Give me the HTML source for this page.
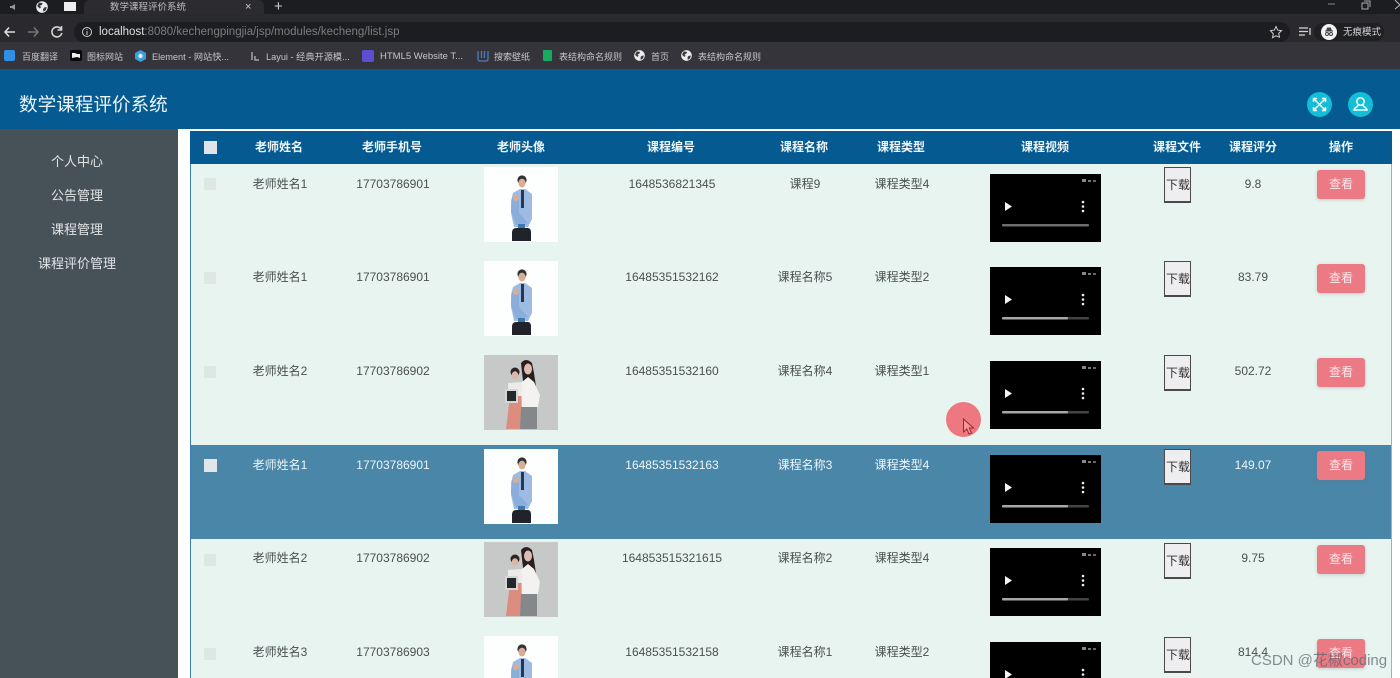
<!DOCTYPE html>
<html><head><meta charset="utf-8"><title>数学课程评价系统</title>
<style>
*{box-sizing:border-box}
html,body{margin:0;padding:0;width:1400px;height:678px;overflow:hidden;background:#fff;font-family:"Liberation Sans","Noto Sans CJK SC",sans-serif}
#wrap{position:absolute;left:0;top:0;width:1400px;height:678px;overflow:hidden;filter:blur(.35px)}
.a{position:absolute}
#top{left:0;top:0;width:1400px;height:14px;background:#1c1d21}
#tab{left:84px;top:0;width:180px;height:15px;background:#2c2c30;border-radius:6px 6px 0 0}
#addr{left:0;top:14px;width:1400px;height:28px;background:#2a2a2e}
#pill{left:74px;top:22px;width:1216px;height:20px;background:#1c1d21;border-radius:10px}
#bm{left:0;top:42px;width:1400px;height:27px;background:#35343a}
.bt{position:absolute;top:50px;font-size:9.2px;line-height:14px;color:#c6c6c8;white-space:nowrap}
.bc{font-size:9px}
.ic{position:absolute;border-radius:50%;background:#e8e8e8}
#head{left:0;top:69px;width:1400px;height:60px;background:#055a92}
#title{left:19px;top:92px;font-size:18.6px;line-height:26px;color:#eaf4f8;white-space:nowrap}
.circ{position:absolute;top:92px;width:25px;height:25px;border-radius:50%;background:#12bfd6}
#side{left:0;top:129px;width:178px;height:549px;background:#465158}
.m{position:absolute;left:0;width:154px;text-align:center;font-size:13px;line-height:20px;color:#e2e5e6}
#tb{left:190px;top:131px;width:1202px;height:547px;background:#e7f4f0;border-left:1px solid #3b7fb2;border-right:1px solid #8fb7cb}
#th{left:190px;top:131px;width:1202px;height:33px;background:#055a92}
.h{position:absolute;top:139px;text-align:center;font-size:12px;font-weight:bold;line-height:16px;color:#eef5f8;white-space:nowrap}
.cb0{position:absolute;left:204px;top:141px;width:13px;height:13px;background:#dfe3ea}
.row{position:absolute;left:191px;width:1200px;height:94px;color:#4a5050}
.hl{background:#4986a8;color:#eef6f8}
.t{position:absolute;top:12px;text-align:center;font-size:12px;line-height:16px;white-space:nowrap;transform:translateX(1px)}
.cb{position:absolute;left:13px;top:14px;width:12px;height:12px;background:#dde7e5}
.hl .cb{background:#e2e5ea;width:13px;height:13px}
.av{position:absolute;left:293px;top:3px;width:74px;height:75px}
.v{position:absolute;left:799px;top:10px;width:111px;height:68px;background:#000}
.dl{position:absolute;left:973px;top:3px;width:27px;height:36px;background:#eeeef0;border:1px solid #4a4a4a;border-width:1px 1px 2px 1px;font-size:12px;line-height:34px;color:#333;white-space:nowrap;padding-left:1px}
.btn{position:absolute;left:1126px;top:6px;width:48px;height:29px;background:#ec7a84;border-radius:3px;color:#f8e8ea;font-size:12px;line-height:28px;text-align:center;box-shadow:0 1px 3px rgba(120,120,120,.3)}
#wm{left:1251px;top:651px;font-size:15px;line-height:20px;color:rgba(90,100,105,.72);white-space:nowrap}
</style></head><body>
<svg width="0" height="0" style="position:absolute"><defs>
<symbol id="man" viewBox="0 0 74 75"><rect width="74" height="75" fill="#fdfefe"/><circle cx="38" cy="13" r="4.6" fill="#2e3236"/><ellipse cx="38" cy="16" rx="3.6" ry="4.4" fill="#d8ad96"/><path d="M29 26 L36 22 L41 22 L48 27 L48 52 L44 60 L30 60 L27 46 L27 34Z" fill="#9dbbe3"/><path d="M37 23 L40 23 L40 41 L37 41Z" fill="#26384f"/><path d="M28 31 L35 30 L35 46 L44 56 L32 58 L27 44Z" fill="#8badd9"/><ellipse cx="32" cy="31" rx="3" ry="3" fill="#d8ad96"/><rect x="34" y="57" width="7" height="9" fill="#3d79b0"/><path d="M28 66 Q28 61 32 61 L44 61 Q47 61 47 66 L47 74 L28 74Z" fill="#20232a"/></symbol>
<symbol id="wom" viewBox="0 0 74 75"><rect width="74" height="75" fill="#c7c9c9"/><circle cx="31" cy="17" r="4.5" fill="#2b2526"/><ellipse cx="31" cy="20" rx="3.2" ry="3.8" fill="#dcb6a6"/><path d="M24 28 L38 27 L38 41 L24 41Z" fill="#ecebea"/><path d="M26 41 L37 41 L38 74 L22 74Z" fill="#dd8d80"/><rect x="21" y="34" width="13" height="14" fill="#d5d5d5"/><rect x="23" y="36" width="9" height="10" fill="#23282b"/><path d="M37 8 Q42 2 48 8 L50 18 L53 38 L45 28 L39 26Z" fill="#262022"/><ellipse cx="44" cy="14" rx="4" ry="5.5" fill="#dfbcae"/><path d="M38 27 L44 22 L50 27 L56 40 L54 52 L38 52Z" fill="#f3f2f1"/><path d="M37 52 L53 52 L53 74 L36 74Z" fill="#85888a"/></symbol>
<symbol id="vid" viewBox="0 0 111 68"><rect width="111" height="68" fill="#000"/><path d="M15 28 L22 32.500 L15 37Z" fill="#f4f4f4"/><circle cx="93" cy="28" r="1.300" fill="#eee"/><circle cx="93" cy="32.500" r="1.300" fill="#eee"/><circle cx="93" cy="37" r="1.300" fill="#eee"/><rect x="92" y="5" width="4" height="3" fill="#888"/><rect x="98" y="6" width="3" height="2" fill="#777"/><rect x="103" y="6" width="3" height="2" fill="#666"/></symbol>
<symbol id="globe" viewBox="0 0 12 12"><circle cx="6" cy="6" r="5.800" fill="#ececec"/><path d="M3 1.500 L6.500 2 L6 4 L4 4.500 L5 6.500 L3.500 7.500 L1.200 5 Z M8 6.500 L10.800 6 L10 9 L7.500 10.800 L7 8.500Z" fill="#3a3a3e"/></symbol>
</defs></svg>

<div id="wrap">
<div class="a" id="top"></div>
<div class="a" id="tab"></div>
<div class="a" style="left:110px;top:1px;font-size:9.5px;line-height:13px;color:#bdbdc0;white-space:nowrap">数学课程评价系统</div>
<div class="a" style="left:245px;top:1px;font-size:11px;line-height:13px;color:#d0d0d0">×</div>
<div class="a" style="left:274px;top:0;font-size:15px;line-height:14px;color:#ccc">+</div>
<svg class="a" style="left:8px;top:2px" width="12" height="10"><path d="M2 4h2l3-2v6l-3-2H2z" fill="#999"/></svg>
<svg class="a" style="left:36px;top:1px" width="12" height="12"><use href="#globe" width="12" height="12"/></svg>
<div class="a" style="left:64px;top:2px;width:12px;height:9px;background:#eee"></div>
<svg class="a" style="left:1320px;top:0" width="80" height="12"><path d="M8 4h7" stroke="#888"/><path d="M42 3h6v6h-6z M44 1h6v6" stroke="#aaa" fill="none"/><path d="M75 0l5 5M75 9l5-4" stroke="#bbb" fill="none"/></svg>

<div class="a" id="addr"></div>
<div class="a" id="pill"></div>
<svg class="a" style="left:0;top:22px" width="100" height="20" fill="none" stroke-width="1.600"><path d="M15 10H5M9 5.500 5 10l4 4.500" stroke="#dedede"/><path d="M28 10h10M34 5.500l4 4.500-4 4.500" stroke="#77777a"/><path d="M62 7a5 5 0 1 0 .8 4M62.500 4v4h-4" stroke="#d4d4d4" transform="translate(-1 0)"/><circle cx="87" cy="10" r="4.500" stroke="#cfcfcf" stroke-width="1"/><path d="M87 9v4M87 7v1" stroke="#cfcfcf" stroke-width="1"/></svg>
<div class="a" style="left:99px;top:24px;font-size:11.5px;line-height:16px;color:#7d7d80;white-space:nowrap"><span style="color:#e0e0e0">localhost</span>:8080/kechengpingjia/jsp/modules/kecheng/list.jsp</div>
<svg class="a" style="left:1269px;top:25px" width="14" height="14"><path d="M7 1.500l1.700 3.600 3.900.5-2.900 2.700.8 3.900L7 10.800l-3.500 1.900.8-3.900L1.400 5.600l3.900-.5z" fill="none" stroke="#cfcfcf"/></svg>
<svg class="a" style="left:1299px;top:27px" width="13" height="10"><path d="M0 1h9M0 4.500h9M0 8h6M11 1v7" stroke="#d5d5d5" stroke-width="1.300"/></svg>
<div class="a" style="left:1314px;top:23px;width:70px;height:18px;border-radius:9px;background:#1f2023"></div>
<div class="ic" style="left:1321px;top:24px;width:16px;height:16px;background:#f2f2f2"></div>
<svg class="a" style="left:1321px;top:24px" width="16" height="16"><path d="M4 7h8M5.500 7l1-3h3l1 3" stroke="#444" fill="#444"/><circle cx="6" cy="10" r="1.500" fill="none" stroke="#444"/><circle cx="10" cy="10" r="1.500" fill="none" stroke="#444"/></svg>
<div class="a" style="left:1343px;top:26px;font-size:9.5px;line-height:14px;color:#d8d8d8;white-space:nowrap">无痕模式</div>

<div class="a" id="bm"></div>
<div class="a" style="left:4px;top:50px;width:11px;height:11px;background:#2f8fe8;border-radius:2px"></div><span class="bt bc" style="left:22px">百度翻译</span>
<svg class="a" style="left:70px;top:50px" width="12" height="11"><rect width="12" height="11" rx="2" fill="#0a0a0a"/><path d="M2 3h3l2 1h3v4L7 7 2 8z" fill="#eee"/></svg><span class="bt bc" style="left:87px">图标网站</span>
<svg class="a" style="left:135px;top:50px" width="11" height="12"><path d="M5.500 0 11 3v6l-5.500 3L0 9V3z" fill="#3f9fd8"/><circle cx="5.500" cy="6" r="2.200" fill="#dff0fa"/></svg><span class="bt" style="left:152px;font-size:9.2px">Element - 网站快...</span>
<svg class="a" style="left:250px;top:51px" width="10" height="10"><path d="M2 1v8M5 5v4h4" stroke="#a5a5a8" stroke-width="1.500" fill="none"/></svg><span class="bt" style="left:266px;font-size:9.2px">Layui - 经典开源模...</span>
<div class="a" style="left:362px;top:50px;width:12px;height:12px;background:#5b4fd0;border-radius:2px"></div><span class="bt" style="left:380px;font-size:9.5px">HTML5 Website T...</span>
<svg class="a" style="left:477px;top:50px" width="12" height="12"><path d="M1 1v8q0 2 2 2h6q2 0 2-2V1M4.500 1v7M7.500 1v7" stroke="#4a7cc0" stroke-width="1.300" fill="none"/></svg><span class="bt bc" style="left:494px">搜索壁纸</span>
<div class="a" style="left:543px;top:50px;width:9px;height:11px;background:#17a862;border-radius:1px"></div><span class="bt bc" style="left:559px">表结构命名规则</span>
<svg class="a" style="left:634px;top:50px" width="11" height="11"><use href="#globe" width="11" height="11"/></svg><span class="bt bc" style="left:651px">首页</span>
<svg class="a" style="left:681px;top:50px" width="11" height="11"><use href="#globe" width="11" height="11"/></svg><span class="bt bc" style="left:698px">表结构命名规则</span>

<div class="a" id="head"></div>
<div class="a" id="title" style="top:92px">数学课程评价系统</div>
<div class="circ" style="left:1307px"></div>
<svg class="a" style="left:1307px;top:92px" width="25" height="25" fill="none" stroke="#fff" stroke-width="1.500"><path d="M6.500 6.500l12 12M18.500 6.500l-12 12M6.500 10V6.500H10M15 6.500h3.500V10M6.500 15v3.500H10M15 18.500h3.500V15"/></svg>
<div class="circ" style="left:1348px"></div>
<svg class="a" style="left:1348px;top:92px" width="25" height="25" fill="none" stroke="#fff" stroke-width="1.500"><circle cx="12.500" cy="9.500" r="3.700"/><path d="M10 13c0 2-4 2.500-4 5h13c0-2.500-4-3-4-5"/></svg>

<div class="a" id="side"></div>
<div class="m" style="top:152px">个人中心</div>
<div class="m" style="top:186px">公告管理</div>
<div class="m" style="top:220px">课程管理</div>
<div class="m" style="top:254px">课程评价管理</div>

<div class="a" id="tb"></div>
<div class="a" id="th"></div>
<div class="cb0"></div>
<div class="h" style="left:229px;width:100px">老师姓名</div>
<div class="h" style="left:342px;width:100px">老师手机号</div>
<div class="h" style="left:471px;width:100px">老师头像</div>
<div class="h" style="left:621px;width:100px">课程编号</div>
<div class="h" style="left:754px;width:100px">课程名称</div>
<div class="h" style="left:851px;width:100px">课程类型</div>
<div class="h" style="left:995px;width:100px">课程视频</div>
<div class="h" style="left:1127px;width:100px">课程文件</div>
<div class="h" style="left:1203px;width:100px">课程评分</div>
<div class="h" style="left:1291px;width:100px">操作</div>

<div class="row" style="top:164px"><div class="cb"></div><div class="t" style="left:38px;width:100px">老师姓名1</div><div class="t" style="left:141px;width:120px">17703786901</div><svg class="av"><use href="#man"/></svg><div class="t" style="left:410px;width:140px">1648536821345</div><div class="t" style="left:553px;width:120px">课程9</div><div class="t" style="left:650px;width:120px">课程类型4</div><svg class="v" viewBox="0 0 111 68"><use href="#vid"/><rect x="12" y="50" width="87" height="2.500" rx="1" fill="#6e6e6e"/></svg><div class="dl">下载</div><div class="t" style="left:1021px;width:80px">9.8</div><div class="btn">查看</div></div>

<div class="row" style="top:258px"><div class="cb"></div><div class="t" style="left:38px;width:100px;top:11px">老师姓名1</div><div class="t" style="left:141px;width:120px;top:11px">17703786901</div><svg class="av"><use href="#man"/></svg><div class="t" style="left:410px;width:140px;top:11px">16485351532162</div><div class="t" style="left:553px;width:120px;top:11px">课程名称5</div><div class="t" style="left:650px;width:120px;top:11px">课程类型2</div><svg class="v" viewBox="0 0 111 68" style="top:9px"><use href="#vid"/><rect x="12" y="50" width="87" height="2.500" rx="1" fill="#444"/><rect x="12" y="50" width="66" height="2.500" rx="1" fill="#a8a8a8"/></svg><div class="dl">下载</div><div class="t" style="left:1021px;width:80px;top:11px">83.79</div><div class="btn">查看</div></div>

<div class="row" style="top:352px"><div class="cb"></div><div class="t" style="left:38px;width:100px;top:11px">老师姓名2</div><div class="t" style="left:141px;width:120px;top:11px">17703786902</div><svg class="av"><use href="#wom"/></svg><div class="t" style="left:410px;width:140px;top:11px">16485351532160</div><div class="t" style="left:553px;width:120px;top:11px">课程名称4</div><div class="t" style="left:650px;width:120px;top:11px">课程类型1</div><svg class="v" viewBox="0 0 111 68" style="top:9px"><use href="#vid"/><rect x="12" y="50" width="87" height="2.500" rx="1" fill="#444"/><rect x="12" y="50" width="66" height="2.500" rx="1" fill="#a8a8a8"/></svg><div class="dl">下载</div><div class="t" style="left:1021px;width:80px;top:11px">502.72</div><div class="btn">查看</div></div>

<div class="row hl" style="top:445px"><div class="cb" style="top:14px"></div><div class="t" style="left:38px;width:100px;top:12px">老师姓名1</div><div class="t" style="left:141px;width:120px;top:12px">17703786901</div><svg class="av" style="top:4px"><use href="#man"/></svg><div class="t" style="left:410px;width:140px;top:12px">16485351532163</div><div class="t" style="left:553px;width:120px;top:12px">课程名称3</div><div class="t" style="left:650px;width:120px;top:12px">课程类型4</div><svg class="v" viewBox="0 0 111 68" style="top:10px"><use href="#vid"/><rect x="12" y="50" width="87" height="2.500" rx="1" fill="#444"/><rect x="12" y="50" width="66" height="2.500" rx="1" fill="#a8a8a8"/></svg><div class="dl" style="top:4px">下载</div><div class="t" style="left:1021px;width:80px;top:12px">149.07</div><div class="btn">查看</div></div>

<div class="row" style="top:540px"><div class="cb"></div><div class="t" style="left:38px;width:100px;top:10px">老师姓名2</div><div class="t" style="left:141px;width:120px;top:10px">17703786902</div><svg class="av" style="top:2px"><use href="#wom"/></svg><div class="t" style="left:410px;width:140px;top:10px">164853515321615</div><div class="t" style="left:553px;width:120px;top:10px">课程名称2</div><div class="t" style="left:650px;width:120px;top:10px">课程类型4</div><svg class="v" viewBox="0 0 111 68" style="top:8px"><use href="#vid"/><rect x="12" y="50" width="87" height="2.500" rx="1" fill="#444"/><rect x="12" y="50" width="66" height="2.500" rx="1" fill="#a8a8a8"/></svg><div class="dl">下载</div><div class="t" style="left:1021px;width:80px;top:10px">9.75</div><div class="btn" style="top:5px">查看</div></div>

<div class="row" style="top:634px;height:44px;overflow:hidden"><div class="cb"></div><div class="t" style="left:38px;width:100px;top:10px">老师姓名3</div><div class="t" style="left:141px;width:120px;top:10px">17703786903</div><svg class="av" style="top:2px;height:42px"><use href="#man" width="74" height="75"/></svg><div class="t" style="left:410px;width:140px;top:10px">16485351532158</div><div class="t" style="left:553px;width:120px;top:10px">课程名称1</div><div class="t" style="left:650px;width:120px;top:10px">课程类型2</div><svg class="v" style="top:8px;height:36px"><use href="#vid" width="111" height="68"/></svg><div class="dl">下载</div><div class="t" style="left:1021px;width:80px;top:10px">814.4</div><div class="btn" style="top:5px">查看</div></div>

<div class="a" style="left:946px;top:402px;width:35px;height:35px;border-radius:50%;background:#ee7880"></div>
<svg class="a" style="left:962px;top:418px" width="13" height="18"><path d="M1.500 1 L1.500 14 L4.800 11 L7 16 L9.500 15 L7.300 10 L11.500 10Z" fill="#f0959a" stroke="#a0262c" stroke-width="1"/></svg>
<div class="a" id="wm">CSDN @花椒coding</div>
</div>
</body></html>
